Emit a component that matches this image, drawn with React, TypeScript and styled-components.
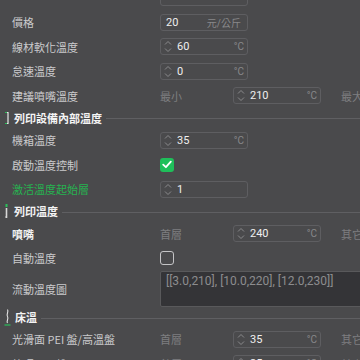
import React from "react";
import styled, { createGlobalStyle } from "styled-components";

const GlobalStyle = createGlobalStyle`
  html, body { margin: 0; padding: 0; background: #4a4a4c; overflow: hidden; }
  body { font-family: "Noto Sans CJK TC", "Noto Sans", sans-serif; }
`;

const Panel = styled.div`
  width: 360px;
  height: 360px;
  overflow: hidden;
  background: #4a4a4c;
`;

const Content = styled.div`
  margin-top: -14.75px;
  width: 480px;
`;

const Row = styled.div<{ $h?: number }>`
  display: flex;
  align-items: center;
  height: ${(p) => p.$h ?? 24.5}px;
`;

const Label = styled.div<{ $tone?: "normal" | "strong" | "green" }>`
  width: 160px;
  flex: none;
  box-sizing: border-box;
  padding-left: 12px;
  font-size: 11px;
  white-space: nowrap;
  font-weight: ${(p) => (p.$tone === "strong" ? 600 : 400)};
  color: ${(p) =>
    p.$tone === "green" ? "#26b350" : p.$tone === "strong" ? "#f2f2f2" : "#cbcbcd"};
`;

const SubLabel = styled.div<{ $gap?: number }>`
  width: 73px;
  flex: none;
  margin-left: ${(p) => p.$gap ?? 0}px;
  font-size: 11px;
  color: #7e7e80;
  white-space: nowrap;
`;

const Field = styled.div`
  width: 88px;
  height: 17px;
  flex: none;
  box-sizing: border-box;
  border: 1px solid #5e5e61;
  border-radius: 3px;
  display: flex;
  align-items: center;
  padding: 0 2px 0 2px;
`;

const Value = styled.span<{ $pad?: number }>`
  font-family: Roboto, "Noto Sans CJK TC", sans-serif;
  font-size: 11px;
  color: #efefef;
  margin-left: ${(p) => p.$pad ?? 5}px;
`;

const Unit = styled.span<{ $pr?: number }>`
  margin-left: auto;
  padding-right: ${(p) => p.$pr ?? 0}px;
  font-family: Roboto, "Noto Sans CJK TC", sans-serif;
  font-size: 10px;
  color: #88888a;
`;

const Spin = styled.svg`
  width: 8px;
  height: 13px;
  margin-left: 1px;
  flex: none;
`;

const Check = styled.div<{ $on?: boolean }>`
  width: 14px;
  height: 14px;
  box-sizing: border-box;
  border-radius: 3px;
  background: ${(p) => (p.$on ? "#1fbf5a" : "transparent")};
  border: ${(p) => (p.$on ? "none" : "1.5px solid #c4c4c6")};
  display: flex;
  align-items: center;
  justify-content: center;
`;

const TextArea = styled.div`
  width: 240px;
  height: 36px;
  flex: none;
  align-self: flex-start;
  margin-top: 0.5px;
  box-sizing: border-box;
  background: #343437;
  border: 1px solid #59595b;
  border-radius: 2px;
  padding: 2px 5px;
  font-family: Roboto, "Noto Sans", sans-serif;
  font-size: 12px;
  color: #8c8c8e;
  white-space: nowrap;
`;

const Header = styled.div`
  display: flex;
  align-items: center;
  height: 20px;
  padding-left: 4px;
`;

const HeaderTitle = styled.span`
  margin-left: 4px;
  font-size: 11px;
  font-weight: 700;
  color: #f4f4f4;
  white-space: nowrap;
`;

const HeaderLine = styled.div`
  flex: 1;
  height: 1px;
  margin-left: 4px;
  margin-top: 2px;
  background: #5f5f62;
`;

const SpinIcon = () => (
  <Spin viewBox="0 0 8 13">
    <path d="M1 4.5 L4 1.5 L7 4.5" fill="none" stroke="#8a8a8c" strokeWidth="1" />
    <path d="M1 8.5 L4 11.5 L7 8.5" fill="none" stroke="#8a8a8c" strokeWidth="1" />
  </Spin>
);

const CheckMark = () => (
  <svg width="10" height="9" viewBox="0 0 10 9">
    <path d="M1.2 4.6 L3.9 7.2 L8.8 1.6" fill="none" stroke="#ffffff" strokeWidth="1.8" strokeLinecap="round" strokeLinejoin="round" />
  </svg>
);

const IconChamber = () => (
  <svg width="6" height="14" viewBox="0 0 6 14">
    <path d="M1 1.5 H4 V12.5 H1" fill="none" stroke="#e6e6e6" strokeWidth="1.2" />
    <path d="M1 1.5 H3" stroke="#2bbf5a" strokeWidth="1.2" />
    <path d="M1 12.5 H3" stroke="#2bbf5a" strokeWidth="1.2" />
  </svg>
);

const IconNozzle = () => (
  <svg width="6" height="16" viewBox="0 0 6 16">
    <rect x="1.5" y="1" width="2" height="3" fill="#2bbf5a" />
    <path d="M2.5 5 V15" stroke="#d8d8d8" strokeWidth="1.6" />
    <path d="M1.5 13 V15" stroke="#9a9a9a" strokeWidth="1" />
  </svg>
);

const IconBed = () => (
  <svg width="7" height="18" viewBox="0 0 7 18">
    <path d="M3.5 1.5 C5 4, 2 6, 3.5 8.5 C5 11, 2 13, 3.5 15" fill="none" stroke="#e0e0e0" strokeWidth="1.1" />
    <path d="M0.5 17 H6.5" stroke="#2bbf5a" strokeWidth="1.2" />
  </svg>
);

type Num = { value: string; unit?: string; spin?: boolean };

const NumField: React.FC<Num> = ({ value, unit = "°C", spin = true }) => (
  <Field>
    {spin && <SpinIcon />}
    <Value $pad={spin ? 5 : 3}>{value}</Value>
    <Unit $pr={unit === "°C" ? 1 : 4}>{unit}</Unit>
  </Field>
);

const Section: React.FC<{ icon: React.ReactNode; title: string }> = ({ icon, title }) => (
  <Header>
    {icon}
    <HeaderTitle>{title}</HeaderTitle>
    <HeaderLine />
  </Header>
);

export default function App() {
  return (
    <>
      <GlobalStyle />
      <Panel>
        <Content>
          <Row>
            <Label />
            <Field />
          </Row>
          <Row>
            <Label>價格</Label>
            <NumField value="20" unit="元/公斤" spin={false} />
          </Row>
          <Row>
            <Label>線材軟化溫度</Label>
            <NumField value="60" />
          </Row>
          <Row>
            <Label>怠速溫度</Label>
            <NumField value="0" />
          </Row>
          <Row>
            <Label>建議噴嘴溫度</Label>
            <SubLabel>最小</SubLabel>
            <NumField value="210" />
            <SubLabel $gap={20}>最大</SubLabel>
          </Row>

          <Section icon={<IconChamber />} title="列印設備內部溫度" />
          <Row>
            <Label>機箱溫度</Label>
            <NumField value="35" />
          </Row>
          <Row>
            <Label>啟動溫度控制</Label>
            <Check $on>
              <CheckMark />
            </Check>
          </Row>
          <Row>
            <Label $tone="green">激活溫度起始層</Label>
            <NumField value="1" unit="" />
          </Row>

          <Section icon={<IconNozzle />} title="列印溫度" />
          <Row>
            <Label $tone="strong">噴嘴</Label>
            <SubLabel>首層</SubLabel>
            <NumField value="240" />
            <SubLabel $gap={20}>其它</SubLabel>
          </Row>
          <Row>
            <Label>自動溫度</Label>
            <Check />
          </Row>
          <Row $h={36.75}>
            <Label>流動溫度圖</Label>
            <TextArea>[[3.0,210], [10.0,220], [12.0,230]]</TextArea>
          </Row>

          <Section icon={<IconBed />} title="床溫" />
          <Row>
            <Label>光滑面 PEI 盤/高溫盤</Label>
            <SubLabel>首層</SubLabel>
            <NumField value="35" />
            <SubLabel $gap={20}>其它</SubLabel>
          </Row>
          <Row>
            <Label>紋理 PEI 盤</Label>
            <SubLabel>首層</SubLabel>
            <NumField value="35" />
            <SubLabel $gap={20}>其它</SubLabel>
          </Row>
        </Content>
      </Panel>
    </>
  );
}
